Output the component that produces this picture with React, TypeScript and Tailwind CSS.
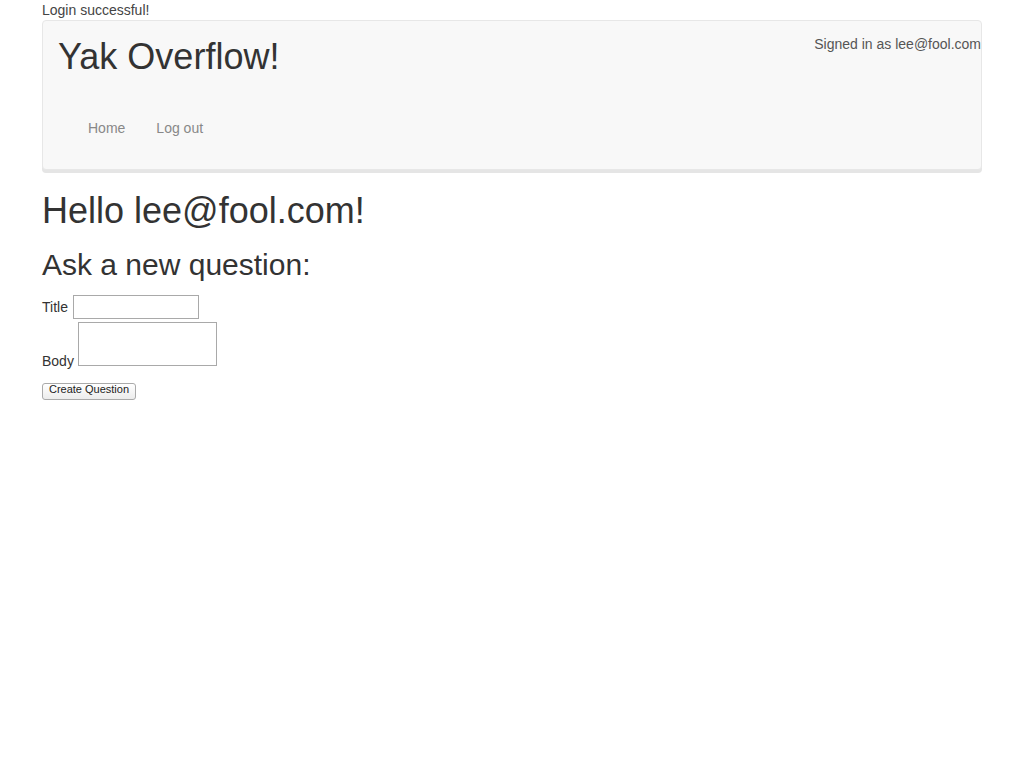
import React from "react";

const App = () => {
  return (
    <div className="min-h-screen bg-white text-[14px] leading-[20px] text-[#333]" style={{ fontFamily: '"Liberation Sans", Arial, sans-serif' }}>
      <div className="mx-auto w-[940px]">
        <div className="text-[#444]">Login successful!</div>
        <div className="h-[150px] rounded-[4px] border border-[#e7e7e7] bg-[#f8f8f8] shadow-[0_3px_0_#e5e5e5]">
          <div className="flex items-start justify-between">
            <a className="ml-[15px] mt-[16px] text-[36px] leading-[40px] text-[#333]">Yak Overflow!</a>
            <p className="mt-[13px] text-[#555]">Signed in as lee@fool.com</p>
          </div>
          <ul className="mt-[26px] ml-[30px] flex">
            <li><a className="block px-[15px] py-[15px] text-[#888]">Home</a></li>
            <li><a className="block pl-[16px] pr-[15px] py-[15px] text-[#888]">Log out</a></li>
          </ul>
        </div>
        <h1 className="mt-[21px] text-[36px] leading-[40px]">Hello lee@fool.com!</h1>
        <h2 className="mt-[17px] text-[30px] leading-[33px]">Ask a new question:</h2>
        <form className="mt-[14px]">
          <div className="flex items-end">
            <label className="mb-[2px]">Title</label>
            <input type="text" className="ml-[5px] h-[24px] w-[126px] border border-[#a9a9a9] bg-white" />
          </div>
          <div className="mt-[3px] flex items-end">
            <label className="mb-[-5px]">Body</label>
            <textarea className="ml-[4px] h-[44px] w-[139px] resize-none border border-[#a9a9a9] bg-white" />
          </div>
          <button type="button" className="mt-[17px] h-[17px] w-[94px] rounded-[3px] border border-[#aaa] bg-gradient-to-b from-white to-[#ececec] pb-[4px] text-[11px] leading-[11px] text-[#222]">
            Create Question
          </button>
        </form>
      </div>
    </div>
  );
};

export default App;
